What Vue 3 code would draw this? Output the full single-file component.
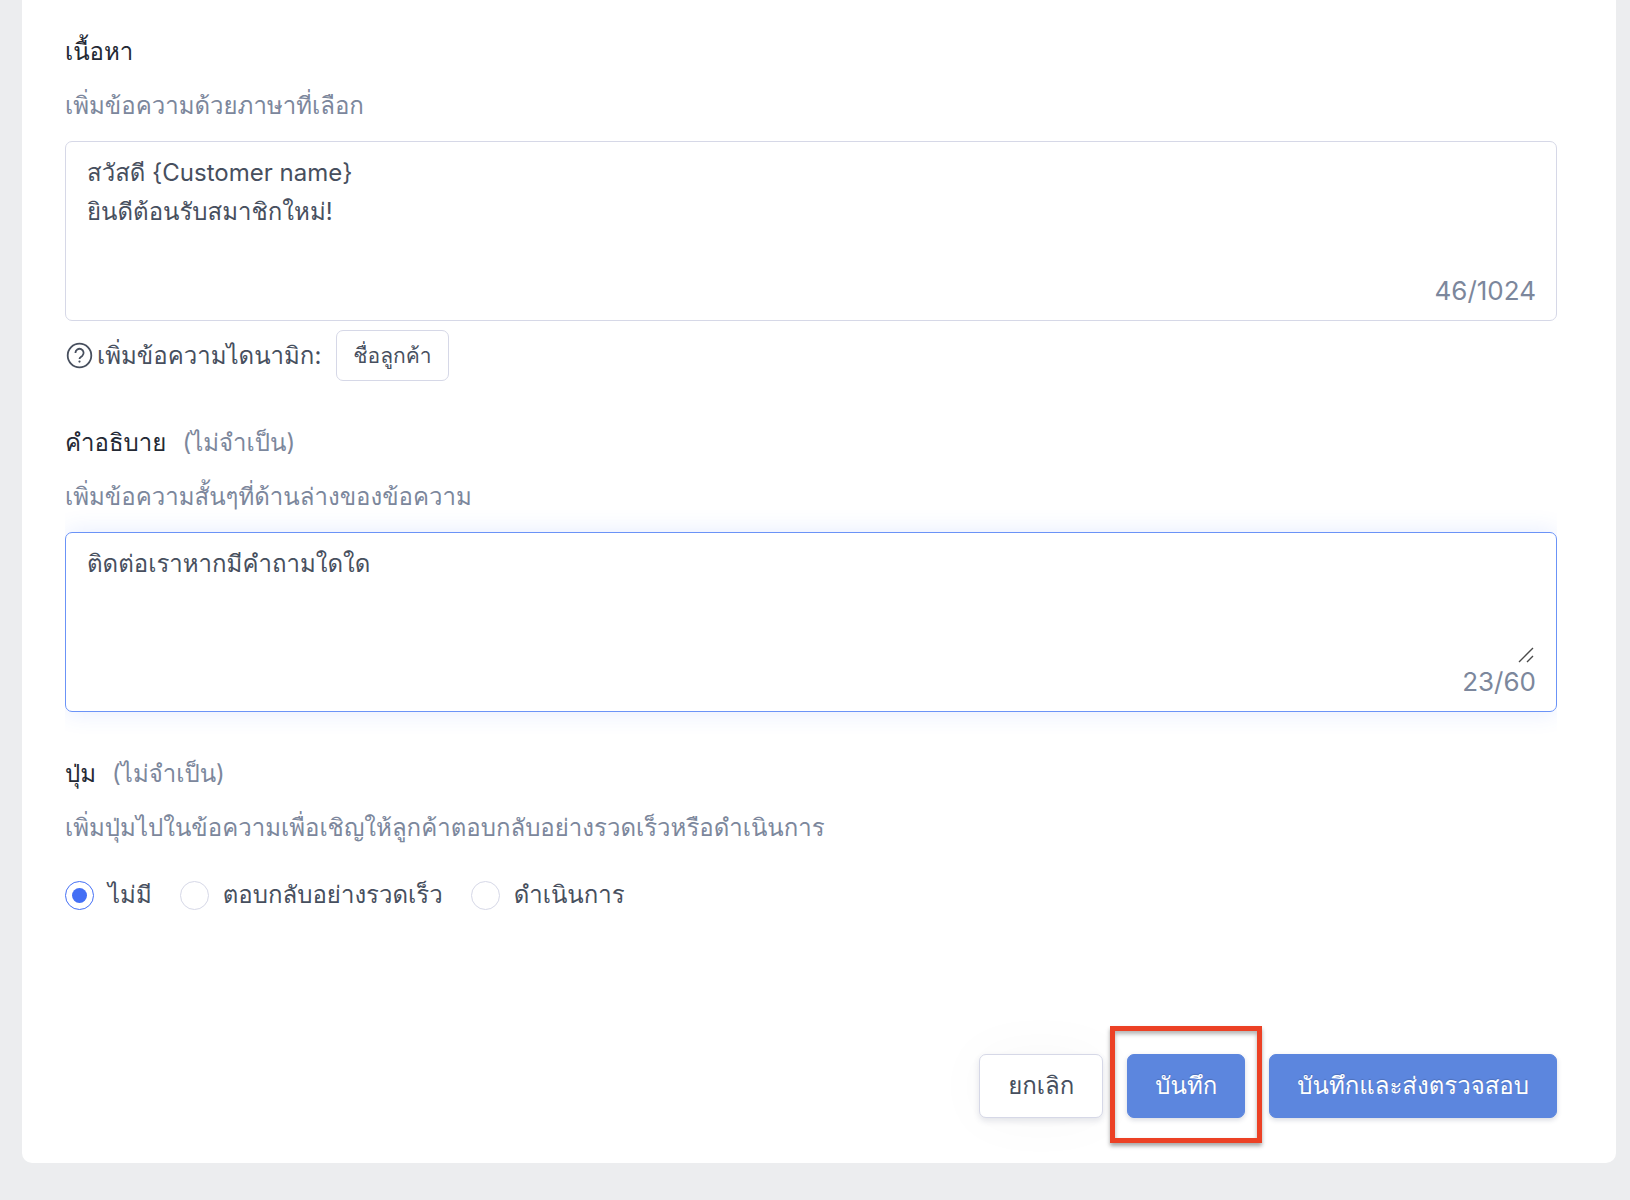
<script setup>
import { ref } from 'vue'

const body = ref('สวัสดี {Customer name}\nยินดีต้อนรับสมาชิกใหม่!')
const footer = ref('ติดต่อเราหากมีคำถามใดใด')
const buttonType = ref('none')
const buttonTypes = [
  { value: 'none', label: 'ไม่มี' },
  { value: 'reply', label: 'ตอบกลับอย่างรวดเร็ว' },
  { value: 'action', label: 'ดำเนินการ' },
]
</script>

<template>
  <main class="page">
    <form class="card" @submit.prevent>
      <section class="section">
        <label class="title" for="body">เนื้อหา</label>
        <p class="hint">เพิ่มข้อความด้วยภาษาที่เลือก</p>
        <div class="field">
          <textarea id="body" v-model="body" spellcheck="false"></textarea>
          <span class="count">46/1024</span>
        </div>
        <div class="dynamic">
          <svg class="help" viewBox="0 0 28 28" fill="none" stroke="currentColor" stroke-width="1.8" aria-hidden="true">
            <circle cx="14.5" cy="13.5" r="11.8" />
            <path d="M10.4 10.9a4.1 4.1 0 1 1 6.9 3c-1.5 1.2-2.8 1.5-2.8 3.1" />
            <circle cx="14.5" cy="19.6" r="1.1" fill="currentColor" stroke="none" />
          </svg>
          <span>เพิ่มข้อความไดนามิก:</span>
          <button class="chip" type="button">ชื่อลูกค้า</button>
        </div>
      </section>

      <section class="section">
        <label class="title" for="footer">คำอธิบาย <span class="optional">(ไม่จำเป็น)</span></label>
        <p class="hint">เพิ่มข้อความสั้นๆที่ด้านล่างของข้อความ</p>
        <div class="field active">
          <textarea id="footer" v-model="footer" spellcheck="false"></textarea>
          <svg class="grip" viewBox="0 0 16 16" stroke="#4a4a4a" stroke-width="1.4" aria-hidden="true">
            <path d="M1 15 15 1M9 15l6-6" />
          </svg>
          <span class="count">23/60</span>
        </div>
      </section>

      <section class="section">
        <h2 id="buttons" class="title">ปุ่ม <span class="optional">(ไม่จำเป็น)</span></h2>
        <p class="hint">เพิ่มปุ่มไปในข้อความเพื่อเชิญให้ลูกค้าตอบกลับอย่างรวดเร็วหรือดำเนินการ</p>
        <div class="radios" role="radiogroup" aria-labelledby="buttons">
          <label v-for="t in buttonTypes" :key="t.value" class="radio">
            <input v-model="buttonType" type="radio" name="buttonType" :value="t.value" />
            {{ t.label }}
          </label>
        </div>
      </section>

      <footer class="actions">
        <button class="btn" type="button">ยกเลิก</button>
        <div class="marked">
          <button class="btn primary" type="button">บันทึก</button>
        </div>
        <button class="btn primary" type="submit">บันทึกและส่งตรวจสอบ</button>
      </footer>
    </form>
  </main>
</template>

<style>
body {
  background: #ecedef;
}
</style>

<style scoped>
.page {
  padding: 0 14px 37px 22px;
  font-family: Inter, Loma, "Noto Sans", sans-serif;
  font-size: 24px;
  line-height: 36px;
  color: #474f5e;
}
.page * {
  box-sizing: border-box;
}
.card {
  padding: 34px 59px 45px 43px;
  background: #fff;
  border-radius: 0 0 10px 10px;
}
.section {
  display: flex;
  flex-direction: column;
  margin-bottom: 44px;
}
.title {
  display: flex;
  gap: 16px;
  margin: 0 0 18px;
  font-size: 24px;
  font-weight: 400;
  color: #242934;
}
.optional,
.hint,
.count {
  color: #7c879c;
}
.hint {
  margin: 0 0 17px;
}
.field {
  position: relative;
  display: flex;
  flex-direction: column;
  height: 180px;
  padding: 11px 20px 11px 21px;
  border: 1px solid #d6d8e7;
  border-radius: 7px;
}
.field.active {
  border-color: #6b93f7;
  box-shadow: 0 0 24px rgba(67, 110, 255, 0.14);
  clip-path: inset(-30px 0);
}
textarea {
  flex: 1;
  padding: 0;
  border: 0;
  outline: 0;
  resize: none;
  background: none;
  font: inherit;
  line-height: 39px;
  color: inherit;
}
.grip {
  position: absolute;
  right: 22px;
  bottom: 48px;
  width: 16px;
  height: 16px;
}
.count {
  align-self: flex-end;
  font-size: 26px;
}
.dynamic {
  display: flex;
  align-items: center;
  margin-top: 9px;
}
.help {
  width: 28px;
  height: 28px;
  margin-right: 4px;
}
.chip {
  height: 51px;
  margin-left: 15px;
  padding: 0 16px;
  border: 1px solid #d6d8e7;
  border-radius: 7px;
  background: #fff;
  font: inherit;
  font-size: 21px;
  color: inherit;
}
.radios {
  display: flex;
  gap: 28px;
  margin-top: 14px;
}
.radio {
  display: flex;
  align-items: center;
  gap: 14px;
}
.radio input {
  appearance: none;
  display: grid;
  place-items: center;
  width: 29px;
  height: 29px;
  margin: 0;
  border: 1px solid #d6d8e7;
  border-radius: 50%;
}
.radio input:checked {
  border-color: #446ff5;
}
.radio input:checked::before {
  content: "";
  width: 15px;
  height: 15px;
  border-radius: 50%;
  background: #446ff5;
}
.actions {
  display: flex;
  justify-content: flex-end;
  gap: 24px;
  margin-top: 141px;
}
.btn {
  height: 64px;
  padding: 0 28px;
  border: 1px solid #d6d8e7;
  border-radius: 7px;
  background: #fff;
  box-shadow: 0 3px 6px rgba(40, 50, 90, 0.12), 0 0 60px rgba(0, 0, 0, 0.03);
  font: inherit;
  color: inherit;
}
.btn.primary {
  padding: 0 27px;
  border-color: #5c86de;
  background: #5c86de;
  box-shadow: 0 2px 5px rgba(40, 50, 90, 0.18);
  color: #fff;
  text-shadow: 0 -1px 1px rgba(0, 0, 0, 0.16);
}
.marked {
  position: relative;
}
.marked::after {
  content: "";
  position: absolute;
  inset: -28px -17px -25px;
  border: 5px solid #ec4125;
  box-shadow: 0 3px 4px rgba(0, 0, 0, 0.35), inset 0 3px 4px rgba(0, 0, 0, 0.3);
  pointer-events: none;
}
</style>
